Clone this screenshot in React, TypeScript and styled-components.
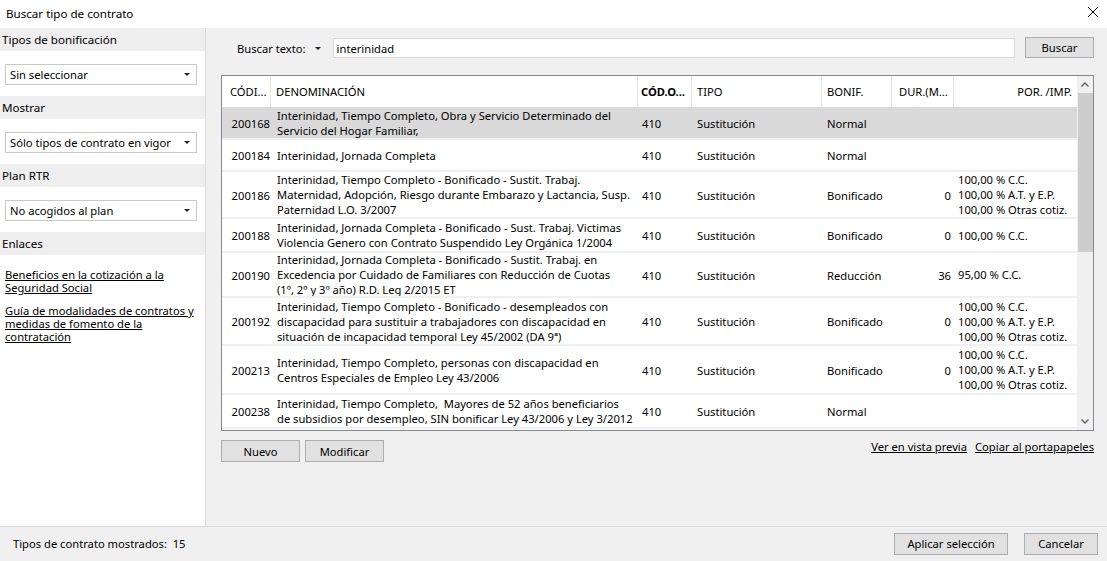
import React from 'react';
import styled, { createGlobalStyle } from 'styled-components';

const GlobalStyle = createGlobalStyle`
  html, body {
    margin: 0;
    padding: 0;
    background: #ffffff;
  }
  body {
    font-family: 'Noto Sans', 'Segoe UI', sans-serif;
    font-size: 11.2px;
    color: #000000;
  }
`;

const Window = styled.div`
  width: 1107px;
  height: 561px;
  display: flex;
  flex-direction: column;
  overflow: hidden;
`;

const TitleBar = styled.div`
  height: 28px;
  flex: none;
  display: flex;
  align-items: center;
  justify-content: space-between;
  padding: 0 8px 2px 6px;
  box-sizing: border-box;
  background: #ffffff;
`;

const Title = styled.span`
  font-size: 11.6px;
`;

const CloseButton = styled.span`
  display: flex;
  width: 12px;
  height: 12px;
  margin-top: -2px;
`;

const Body = styled.div`
  flex: 1;
  display: flex;
  min-height: 0;
`;

const Sidebar = styled.div`
  width: 205px;
  flex: none;
  background: #ffffff;
  border-right: 1px solid #dadada;
  display: flex;
  flex-direction: column;
`;

const SectionHeader = styled.div`
  height: 23px;
  display: flex;
  align-items: center;
  padding-left: 2px;
  background: #eeeeee;
  font-size: 11.6px;
`;

const SectionBody = styled.div`
  padding: 13px 8px 11px 5px;
`;

const LinksBody = styled.div`
  padding: 13px 6px 0 5px;
  display: flex;
  flex-direction: column;
  gap: 10px;
`;

const Combo = styled.div`
  height: 21px;
  box-sizing: border-box;
  border: 1px solid #c8c8c8;
  background: #ffffff;
  display: flex;
  align-items: center;
  justify-content: space-between;
  padding: 0 6px 0 4px;
`;

const Caret = styled.span`
  width: 0;
  height: 0;
  border-left: 3px solid transparent;
  border-right: 3px solid transparent;
  border-top: 3px solid #222222;
`;

const SideLink = styled.a`
  color: #000000;
  text-decoration: underline;
  line-height: 13px;
  cursor: pointer;
`;

const Main = styled.div`
  flex: 1;
  background: #f0f0f0;
  display: flex;
  flex-direction: column;
  padding: 10px 13px 0 15px;
  min-width: 0;
`;

const SearchRow = styled.div`
  display: flex;
  align-items: center;
  height: 20px;
  padding-left: 16px;
`;

const SearchLabel = styled.span`
  display: flex;
  align-items: center;
  gap: 9px;
  margin-right: 12px;
`;

const SearchInput = styled.div`
  flex: 1;
  height: 20px;
  box-sizing: border-box;
  border: 1px solid #d9d9d9;
  background: #ffffff;
  display: flex;
  align-items: center;
  padding-left: 3px;
`;

const Button = styled.button<{ $width: number }>`
  width: ${(p) => p.$width}px;
  height: 22px;
  flex: none;
  box-sizing: border-box;
  border: 1px solid #adadad;
  background: #e1e1e1;
  font-family: inherit;
  font-size: 11.2px;
  color: #000000;
  padding: 0;
`;

const SearchButton = styled(Button)`
  margin-left: 10px;
  height: 21px;
  margin-top: -1px;
`;

const TableFrame = styled.div`
  margin-top: 17px;
  height: 356px;
  box-sizing: border-box;
  border: 1px solid #828790;
  background: #ffffff;
  display: flex;
`;

const TableArea = styled.div`
  flex: 1;
  display: flex;
  flex-direction: column;
  overflow: hidden;
`;

const columns = '49px 367px 54px 130px 70px 62px 123px';

const HeaderRow = styled.div`
  display: grid;
  grid-template-columns: ${columns};
  height: 31px;
  flex: none;
`;

const HeaderCell = styled.div<{ $right?: boolean; $bold?: boolean; $last?: boolean; $padLeft?: number }>`
  display: flex;
  align-items: center;
  justify-content: ${(p) => (p.$right ? 'flex-end' : 'flex-start')};
  padding: 0 5px 0 ${(p) => p.$padLeft ?? 5}px;
  border-right: ${(p) => (p.$last ? 'none' : '1px solid #e5e5e5')};
  font-weight: ${(p) => (p.$bold ? 700 : 400)};
  white-space: nowrap;
  overflow: hidden;
`;

const Rows = styled.div`
  flex: 1;
  overflow: hidden;
`;

const Row = styled.div<{ $selected?: boolean; $height: number }>`
  display: grid;
  grid-template-columns: ${columns};
  height: ${(p) => p.$height}px;
  box-sizing: border-box;
  border-bottom: 2px solid #f0f0f0;
  background: ${(p) => (p.$selected ? '#d9d9d9' : '#ffffff')};
`;

const Cell = styled.div<{ $align?: 'left' | 'right'; $pad?: string }>`
  display: flex;
  flex-direction: column;
  justify-content: center;
  align-items: ${(p) => (p.$align === 'right' ? 'flex-end' : 'flex-start')};
  padding: ${(p) => p.$pad ?? '1px 5px 0'};
  line-height: 15px;
  white-space: nowrap;
  overflow: hidden;
`;

const Scrollbar = styled.div`
  width: 16px;
  flex: none;
  background: #f0f0f0;
  display: flex;
  flex-direction: column;
  align-items: center;
`;

const ScrollArrow = styled.div`
  height: 17px;
  width: 16px;
  display: flex;
  align-items: center;
  justify-content: center;
`;

const ScrollThumb = styled.div`
  width: 15px;
  height: 159px;
  background: #cdcdcd;
`;

const ScrollTrack = styled.div`
  flex: 1;
`;

const ActionRow = styled.div`
  display: flex;
  align-items: flex-start;
  margin-top: 9px;
  gap: 5px;
`;

const Spacer = styled.div`
  flex: 1;
`;

const ActionLink = styled.a`
  color: #000000;
  text-decoration: underline;
  margin-left: 3px;
  line-height: 14px;
  cursor: pointer;
`;

const Footer = styled.div`
  height: 35px;
  flex: none;
  box-sizing: border-box;
  border-top: 1px solid #dadada;
  background: #f0f0f0;
  display: flex;
  align-items: center;
  padding: 0 9px 1px 13px;
  gap: 16px;
`;

const FooterText = styled.span`
  flex: 1;
  white-space: pre;
`;

type ContractRow = {
  code: string;
  name: string[];
  tipo: string;
  bonif: string;
  dur: string;
  por: string[];
  height: number;
};

const cc3 = ['100,00 % C.C.', '100,00 % A.T. y E.P.', '100,00 % Otras cotiz.'];

const rows: ContractRow[] = [
  {
    code: '200168',
    name: ['Interinidad, Tiempo Completo, Obra y Servicio Determinado del', 'Servicio del Hogar Familiar,'],
    tipo: 'Sustitución',
    bonif: 'Normal',
    dur: '',
    por: [],
    height: 33,
  },
  {
    code: '200184',
    name: ['Interinidad, Jornada Completa'],
    tipo: 'Sustitución',
    bonif: 'Normal',
    dur: '',
    por: [],
    height: 32,
  },
  {
    code: '200186',
    name: [
      'Interinidad, Tiempo Completo - Bonificado - Sustit. Trabaj.',
      'Maternidad, Adopción, Riesgo durante Embarazo y Lactancia, Susp.',
      'Paternidad L.O. 3/2007',
    ],
    tipo: 'Sustitución',
    bonif: 'Bonificado',
    dur: '0',
    por: cc3,
    height: 47,
  },
  {
    code: '200188',
    name: [
      'Interinidad, Jornada Completa - Bonificado - Sust. Trabaj. Victimas',
      'Violencia Genero con Contrato Suspendido Ley Orgánica 1/2004',
    ],
    tipo: 'Sustitución',
    bonif: 'Bonificado',
    dur: '0',
    por: ['100,00 % C.C.'],
    height: 34,
  },
  {
    code: '200190',
    name: [
      'Interinidad, Jornada Completa - Bonificado - Sustit. Trabaj. en',
      'Excedencia por Cuidado de Familiares con Reducción de Cuotas',
      '(1º, 2º y 3º año) R.D. Leg 2/2015 ET',
    ],
    tipo: 'Sustitución',
    bonif: 'Reducción',
    dur: '36',
    por: ['95,00 % C.C.'],
    height: 45,
  },
  {
    code: '200192',
    name: [
      'Interinidad, Tiempo Completo - Bonificado - desempleados con',
      'discapacidad para sustituir a trabajadores con discapacidad en',
      'situación de incapacidad temporal Ley 45/2002 (DA 9ª)',
    ],
    tipo: 'Sustitución',
    bonif: 'Bonificado',
    dur: '0',
    por: cc3,
    height: 48,
  },
  {
    code: '200213',
    name: ['Interinidad, Tiempo Completo, personas con discapacidad en', 'Centros Especiales de Empleo Ley 43/2006'],
    tipo: 'Sustitución',
    bonif: 'Bonificado',
    dur: '0',
    por: cc3,
    height: 49,
  },
  {
    code: '200238',
    name: [
      'Interinidad, Tiempo Completo,  Mayores de 52 años beneficiarios',
      'de subsidios por desempleo, SIN bonificar Ley 43/2006 y Ley 3/2012',
    ],
    tipo: 'Sustitución',
    bonif: 'Normal',
    dur: '',
    por: [],
    height: 34,
  },
];

const Lines: React.FC<{ lines: string[] }> = ({ lines }) => (
  <>
    {lines.map((l) => (
      <span key={l} style={{ whiteSpace: 'pre' }}>
        {l}
      </span>
    ))}
  </>
);

const Chevron: React.FC<{ up?: boolean }> = ({ up }) => (
  <svg width="8" height="5" viewBox="0 0 8 5">
    <path d={up ? 'M0.5 4.5 L4 1 L7.5 4.5' : 'M0.5 0.5 L4 4 L7.5 0.5'} fill="none" stroke="#606060" strokeWidth="1.4" />
  </svg>
);

export default function App() {
  return (
    <Window>
      <GlobalStyle />
      <TitleBar>
        <Title>Buscar tipo de contrato</Title>
        <CloseButton>
          <svg width="12" height="12" viewBox="0 0 12 12">
            <path d="M1 1 L11 11 M11 1 L1 11" stroke="#000" strokeWidth="1" />
          </svg>
        </CloseButton>
      </TitleBar>
      <Body>
        <Sidebar>
          <SectionHeader>Tipos de bonificación</SectionHeader>
          <SectionBody>
            <Combo>
              Sin seleccionar <Caret />
            </Combo>
          </SectionBody>
          <SectionHeader>Mostrar</SectionHeader>
          <SectionBody>
            <Combo>
              Sólo tipos de contrato en vigor <Caret />
            </Combo>
          </SectionBody>
          <SectionHeader>Plan RTR</SectionHeader>
          <SectionBody>
            <Combo>
              No acogidos al plan <Caret />
            </Combo>
          </SectionBody>
          <SectionHeader>Enlaces</SectionHeader>
          <LinksBody>
            <SideLink>
              Beneficios en la cotización a la
              <br />
              Seguridad Social
            </SideLink>
            <SideLink>
              Guía de modalidades de contratos y
              <br />
              medidas de fomento de la
              <br />
              contratación
            </SideLink>
          </LinksBody>
        </Sidebar>
        <Main>
          <SearchRow>
            <SearchLabel>
              Buscar texto: <Caret />
            </SearchLabel>
            <SearchInput>interinidad</SearchInput>
            <SearchButton $width={69}>Buscar</SearchButton>
          </SearchRow>
          <TableFrame>
            <TableArea>
              <HeaderRow>
                <HeaderCell $padLeft={8}>CÓDI...</HeaderCell>
                <HeaderCell>DENOMINACIÓN</HeaderCell>
                <HeaderCell $bold $padLeft={3}>
                  CÓD.O...
                </HeaderCell>
                <HeaderCell>TIPO</HeaderCell>
                <HeaderCell>BONIF.</HeaderCell>
                <HeaderCell $padLeft={7}>DUR.(M...</HeaderCell>
                <HeaderCell $right $last>
                  POR. /IMP.
                </HeaderCell>
              </HeaderRow>
              <Rows>
                {rows.map((r, i) => (
                  <Row key={r.code} $selected={i === 0} $height={r.height}>
                    <Cell $align="right" $pad="1px 1px 0 0">
                      {r.code}
                    </Cell>
                    <Cell $pad="0 0 0 6px">
                      <Lines lines={r.name} />
                    </Cell>
                    <Cell $pad="1px 0 0 4px">410</Cell>
                    <Cell>{r.tipo}</Cell>
                    <Cell>{r.bonif}</Cell>
                    <Cell $align="right" $pad="1px 3px 0 0">
                      {r.dur}
                    </Cell>
                    <Cell $pad="0 0 0 4px">
                      <Lines lines={r.por} />
                    </Cell>
                  </Row>
                ))}
              </Rows>
            </TableArea>
            <Scrollbar>
              <ScrollArrow>
                <Chevron up />
              </ScrollArrow>
              <ScrollThumb />
              <ScrollTrack />
              <ScrollArrow>
                <Chevron />
              </ScrollArrow>
            </Scrollbar>
          </TableFrame>
          <ActionRow>
            <Button $width={79}>Nuevo</Button>
            <Button $width={79}>Modificar</Button>
            <Spacer />
            <ActionLink>Ver en vista previa</ActionLink>
            <ActionLink>Copiar al portapapeles</ActionLink>
          </ActionRow>
        </Main>
      </Body>
      <Footer>
        <FooterText>Tipos de contrato mostrados:  15</FooterText>
        <Button $width={114}>Aplicar selección</Button>
        <Button $width={74}>Cancelar</Button>
      </Footer>
    </Window>
  );
}
